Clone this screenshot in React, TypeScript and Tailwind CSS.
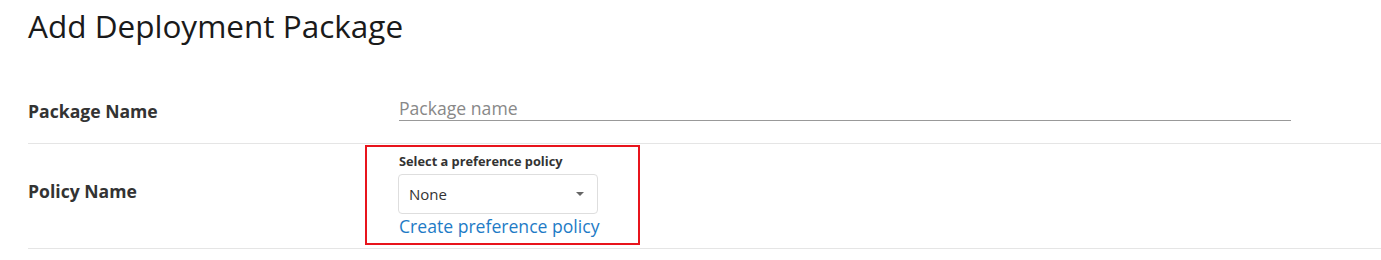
export default function App() {
  return (
    <div className="min-h-[260px] bg-white pl-[28px] font-['Open_Sans',sans-serif] text-[#333]">
      <div className="h-[79px] pt-[6px]">
        <h1 className="text-[31.5px] font-medium leading-[40px] text-[#1a1a1a]">Add Deployment Package</h1>
      </div>

      <div className="grid grid-cols-[337px_1fr] border-b border-[#e5e5e5] h-[65px] items-center">
        <label htmlFor="packageName" className="text-[17.6px] font-bold leading-[24px]">
          Package Name
        </label>
        <div className="pl-[34px] -mt-[6px]">
          <input
            id="packageName"
            type="text"
            placeholder="Package name"
            className="block w-[892px] h-[25px] border-b border-[#999] bg-transparent text-[17.6px] leading-[24px] text-[#333] placeholder:text-[#888] outline-none"
          />
        </div>
      </div>

      <div className="grid grid-cols-[337px_1fr] border-b border-[#e5e5e5] h-[105px]">
        <div className="pt-[35px] text-[17.6px] font-bold leading-[24px]">Policy Name</div>
        <div className="pt-[1px]">
          <div className="w-[275px] h-[100px] border-2 border-[#e8141c] pl-[32px] pt-[6px]">
            <div className="text-[12.8px] font-bold leading-[17px] text-[#333]">Select a preference policy</div>
            <button
              type="button"
              className="mt-[4px] -ml-[1px] flex h-[40px] w-[200px] items-center justify-between rounded-[4px] border border-[#dedede] bg-white pl-[10px] pr-[13px] text-[15px] text-[#333]"
            >
              <span>None</span>
              <svg width="8" height="4" viewBox="0 0 8 4" className="fill-[#666]">
                <path d="M0 0h8L4 4z" />
              </svg>
            </button>
            <a href="#" className="block pt-[1px] text-[17.6px] leading-[22px] text-[#1e7bc6]">
              Create preference policy
            </a>
          </div>
        </div>
      </div>
    </div>
  );
}
